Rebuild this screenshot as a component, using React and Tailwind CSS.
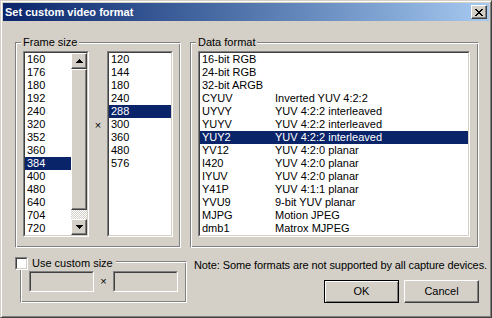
import React from "react";

const widths = ["160", "176", "180", "192", "240", "320", "352", "360", "384", "400", "480", "640", "704", "720"];
const heights = ["120", "144", "180", "240", "288", "300", "360", "480", "576"];
const formats = [
  ["16-bit RGB", ""],
  ["24-bit RGB", ""],
  ["32-bit ARGB", ""],
  ["CYUV", "Inverted YUV 4:2:2"],
  ["UYVY", "YUV 4:2:2 interleaved"],
  ["YUYV", "YUV 4:2:2 interleaved"],
  ["YUY2", "YUV 4:2:2 interleaved"],
  ["YV12", "YUV 4:2:0 planar"],
  ["I420", "YUV 4:2:0 planar"],
  ["IYUV", "YUV 4:2:0 planar"],
  ["Y41P", "YUV 4:1:1 planar"],
  ["YVU9", "9-bit YUV planar"],
  ["MJPG", "Motion JPEG"],
  ["dmb1", "Matrox MJPEG"],
];

const raised =
  "border border-t-white border-l-white border-r-[#404040] border-b-[#404040] shadow-[inset_-1px_-1px_#808080] bg-[#D4D0C8]";

// pixel glyphs, drawn row by row
const closeGlyph = [
  [0, 0, 2], [6, 0, 2],
  [1, 1, 2], [5, 1, 2],
  [2, 2, 4],
  [3, 3, 2],
  [2, 4, 4],
  [1, 5, 2], [5, 5, 2],
  [0, 6, 2], [6, 6, 2],
];
const upGlyph = [[3, 0, 1], [2, 1, 3], [1, 2, 5], [0, 3, 7]];
const downGlyph = [[0, 0, 7], [1, 1, 5], [2, 2, 3], [3, 3, 1]];

const Glyph = ({ rows, w, h }) => (
  <svg width={w} height={h} viewBox={`0 0 ${w} ${h}`} shapeRendering="crispEdges">
    {rows.map(([x, y, len], i) => (
      <rect key={i} x={x} y={y} width={len} height="1" fill="#000" />
    ))}
  </svg>
);

const Sunken = ({ className = "", innerClass = "bg-white", children }) => (
  <div className={`border border-t-[#808080] border-l-[#808080] border-r-white border-b-white ${className}`}>
    <div className={`h-full w-full border border-t-[#404040] border-l-[#404040] border-r-[#D4D0C8] border-b-[#D4D0C8] ${innerClass}`}>
      {children}
    </div>
  </div>
);

const GroupBox = ({ label, className = "", children }) => (
  <div
    className={`relative border border-t-[#808080] border-l-[#808080] border-r-white border-b-white shadow-[inset_1px_1px_white,inset_-1px_-1px_#808080] ${className}`}
  >
    {label && (
      <span className="absolute -top-[7px] left-[5px] bg-[#D4D0C8] px-[2px] leading-[13px]">{label}</span>
    )}
    {children}
  </div>
);

const Row = ({ selected, children, className = "" }) => (
  <div
    className={`flex h-[13px] items-center pl-[2px] leading-[13px] whitespace-nowrap ${
      selected ? "bg-[#0A246A] text-white" : "text-black"
    } ${className}`}
  >
    {children}
  </div>
);

const ScrollButton = ({ glyph }) => (
  <div className={`flex h-[16px] w-[16px] items-center justify-center ${raised}`}>
    <Glyph rows={glyph} w={7} h={4} />
  </div>
);

export default function App() {
  return (
    <div className="h-[318px] w-[492px] overflow-hidden border border-t-[#D4D0C8] border-l-[#D4D0C8] border-r-[#404040] border-b-[#404040] bg-[#D4D0C8] p-[2px] font-['Liberation_Sans',Arial,sans-serif] text-[11px] leading-[13px] text-black shadow-[inset_1px_1px_white,inset_-1px_-1px_#808080]">
      {/* title bar */}
      <div className="flex h-[18px] items-center bg-gradient-to-r from-[#0A246A] to-[#A6CAF0] pl-[2px] pr-[2px]">
        <span className="flex-1 text-[11px] font-bold text-white">Set custom video format</span>
        <div className={`flex h-[14px] w-[16px] items-center justify-center ${raised}`}>
          <Glyph rows={closeGlyph} w={8} h={7} />
        </div>
      </div>

      {/* body */}
      <div className="flex flex-col pl-[12px] pr-[10px] pt-[21px]">
        <div className="flex gap-[9px]">
          <GroupBox label="Frame size" className="h-[206px] w-[166px] pl-[7px] pt-[8px]">
            <div className="flex">
              <Sunken className="h-[186px] w-[66px]">
                <div className="flex h-full">
                  <div className="w-[46px]">
                    {widths.map((v) => (
                      <Row key={v} selected={v === "384"}>
                        {v}
                      </Row>
                    ))}
                  </div>
                  <div className="flex w-[16px] flex-col">
                    <ScrollButton glyph={upGlyph} />
                    <div className={`h-[141px] w-[16px] ${raised}`} />
                    <div className="h-[9px] w-[16px] bg-[repeating-conic-gradient(#fff_0_25%,#D4D0C8_0_50%)] bg-[length:2px_2px]" />
                    <ScrollButton glyph={downGlyph} />
                  </div>
                </div>
              </Sunken>
              <div className="flex w-[18px] justify-center pt-[68px]">×</div>
              <Sunken className="h-[186px] w-[66px]">
                {heights.map((v) => (
                  <Row key={v} selected={v === "288"}>
                    {v}
                  </Row>
                ))}
              </Sunken>
            </div>
          </GroupBox>

          <GroupBox label="Data format" className="h-[206px] w-[289px] pl-[7px] pt-[8px]">
            <Sunken className="h-[186px] w-[272px]">
              {formats.map(([code, desc]) => (
                <Row key={code} selected={code === "YUY2"}>
                  <span className="w-[73px]">{code}</span>
                  <span>{desc}</span>
                </Row>
              ))}
            </Sunken>
          </GroupBox>
        </div>

        <div className="flex gap-[7px]">
          {/* custom size */}
          <div className="relative w-[172px] shrink-0 pt-[13px]">
            <GroupBox className="ml-[5px] flex h-[42px] w-[167px] items-start pl-[8px] pt-[9px]">
              <Sunken className="h-[21px] w-[65px]" innerClass="bg-[#D4D0C8]" />
              <div className="flex h-[21px] w-[19px] items-center justify-center">×</div>
              <Sunken className="h-[21px] w-[65px]" innerClass="bg-[#D4D0C8]" />
            </GroupBox>
            <div className="absolute left-0 top-[9px] flex items-center bg-[#D4D0C8] pr-[3px]">
              <Sunken className="h-[13px] w-[13px]" />
              <span className="ml-[4px] leading-[13px]">Use custom size</span>
            </div>
          </div>

          {/* note and buttons */}
          <div className="flex min-w-0 flex-1 flex-col pt-[11px]">
            <div className="whitespace-nowrap leading-[13px] tracking-[-0.1px]">
              Note: Some formats are not supported by all capture devices.
            </div>
            <div className="mt-[8px] flex justify-end gap-[5px]">
              <div className="flex h-[23px] w-[75px] items-center justify-center border border-black bg-[#D4D0C8] shadow-[inset_1px_1px_white,inset_-1px_-1px_#808080]">
                OK
              </div>
              <div className={`flex h-[23px] w-[75px] items-center justify-center ${raised}`}>Cancel</div>
            </div>
          </div>
        </div>
      </div>
    </div>
  );
}
